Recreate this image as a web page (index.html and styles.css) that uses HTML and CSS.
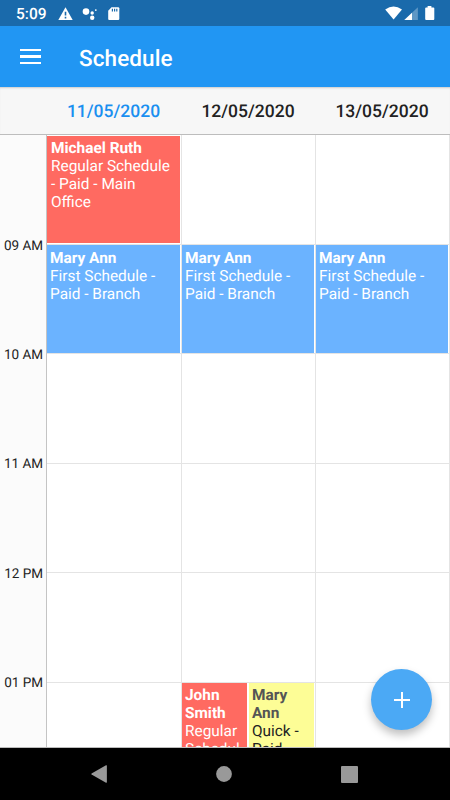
FILE: index.html
```html
<!DOCTYPE html>
<html lang="en">
<head>
<meta charset="UTF-8" />
<meta name="viewport" content="width=device-width, initial-scale=1" />
<title>Schedule</title>
<link rel="stylesheet" href="styles.css">
</head>
<body>

<div class="status-bar">
  <span class="clock">5:09</span>
  <svg class="status-left" width="64" height="16" viewBox="0 0 64 16" fill="#fff">
    <path d="M7.5 1.2L14.7 14H0.3z" />
    <path d="M6.7 5.8h1.6v3.8H6.7zM6.7 10.8h1.6v1.6H6.7z" fill="#1a6aab" />
    <circle cx="28" cy="5.6" r="3.3" />
    <circle cx="34.2" cy="7" r="1.7" />
    <circle cx="34.2" cy="11.8" r="2.2" />
    <circle cx="37.8" cy="4.1" r="0.9" />
    <path d="M53.5 1.2h6.7q1.1 0 1.1 1.1v10.6q0 1.1-1.1 1.1h-8.9q-1.1 0-1.1-1.1V4.8z" />
    <path d="M53.8 2.8h1.2v2.7h-1.2zM56 2.8h1.2v2.7H56zM58.2 2.8h1.2v2.7h-1.2z" fill="#1a6aab" />
  </svg>
  <svg class="status-right" width="50" height="16" viewBox="0 0 50 16" fill="#fff">
    <path d="M0.2 3.4Q8.5-2.6 17 3.4L8.6 13.6z" />
    <path d="M32.9 1.2v12.8H19.3z" fill="#5e97c5" />
    <path d="M27 6.8v7.2h-7.7z" />
    <path d="M42.6 0h3.8v1.4h2q.9 0 .9.9v10.8q0 .9-.9.9h-7.3q-.9 0-.9-.9V2.3q0-.9.9-.9h1.5z" />
  </svg>
</div>

<div class="app-bar">
  <button class="menu-btn" aria-label="Menu">
    <span></span>
    <span></span>
    <span></span>
  </button>
  <h1>Schedule</h1>
</div>

<div class="day-header">
  <div class="corner"></div>
  <div class="day today">11/05/2020</div>
  <div class="day">12/05/2020</div>
  <div class="day">13/05/2020</div>
</div>

<div class="calendar">
  <div class="times">
    <div class="time">09 AM</div>
    <div class="time">10 AM</div>
    <div class="time">11 AM</div>
    <div class="time">12 PM</div>
    <div class="time">01 PM</div>
  </div>

  <div class="column">
    <div class="slot first">
      <div class="event red"><b>Michael Ruth</b>Regular Schedule - Paid - Main Office</div>
    </div>
    <div class="slot">
      <div class="event blue"><b>Mary Ann</b>First Schedule - Paid - Branch</div>
    </div>
    <div class="slot"></div>
    <div class="slot"></div>
    <div class="slot"></div>
    <div class="slot"></div>
  </div>

  <div class="column">
    <div class="slot first"></div>
    <div class="slot">
      <div class="event blue"><b>Mary Ann</b>First Schedule - Paid - Branch</div>
    </div>
    <div class="slot"></div>
    <div class="slot"></div>
    <div class="slot"></div>
    <div class="slot split">
      <div class="event red"><b>John Smith</b>Regular Schedul</div>
      <div class="event yellow"><b>Mary Ann</b>Quick - Paid</div>
    </div>
  </div>

  <div class="column">
    <div class="slot first"></div>
    <div class="slot">
      <div class="event blue"><b>Mary Ann</b>First Schedule - Paid - Branch</div>
    </div>
    <div class="slot"></div>
    <div class="slot"></div>
    <div class="slot"></div>
    <div class="slot"></div>
  </div>
</div>

<button class="add-btn" aria-label="Add">
  <svg width="16" height="16" viewBox="0 0 16 16" fill="#fff">
    <path d="M7 0h2v7h7v2H9v7H7V9H0V7h7z" />
  </svg>
</button>

<div class="nav-bar">
  <svg width="16" height="18" viewBox="0 0 16 18" fill="#999"><path d="M15 0.3q.9-.4.9.6v16.2q0 1-.9.6L.6 9.5q-.6-.5 0-1z" /></svg>
  <svg width="16" height="16" viewBox="0 0 16 16" fill="#999"><circle cx="8" cy="8" r="7.9" /></svg>
  <svg width="17" height="17" viewBox="0 0 17 17" fill="#999"><rect width="17" height="17" rx="1" /></svg>
</div>

</body>
</html>
```
FILE: styles.css
```css
* {
  box-sizing: border-box;
}
body {
  margin: 0;
  width: 450px;
  height: 800px;
  display: flex;
  flex-direction: column;
  overflow: hidden;
  background: #fff;
  font-family: Roboto, sans-serif;
  text-rendering: geometricPrecision;
  color: #222;
}
button {
  border: none;
  padding: 0;
  cursor: pointer;
}

/* top bars */
.status-bar {
  height: 26px;
  flex: none;
  display: flex;
  align-items: center;
  padding: 0 15px 0 16px;
  background: #1a6aab;
  color: #fff;
}
.clock {
  width: 42px;
  font-size: 15.5px;
  font-weight: 500;
  line-height: 26px;
  padding-top: 2px;
}
.status-left,
.status-right {
  margin-top: 1px;
}
.status-right {
  margin-left: auto;
}
.app-bar {
  height: 61px;
  flex: none;
  display: flex;
  align-items: center;
  padding-left: 20px;
  background: #2196f3;
  color: #fff;
}
.menu-btn {
  width: 21px;
  display: flex;
  flex-direction: column;
  gap: 4px;
  background: none;
}
.menu-btn span {
  height: 2.5px;
  width: 100%;
  background: #fff;
}
.app-bar h1 {
  margin: 4px 0 0 38px;
  font-size: 22.5px;
  font-weight: 500;
  letter-spacing: 0.1px;
}

/* calendar */
.day-header,
.calendar {
  display: grid;
  grid-template-columns: 47px 135px 134px 134px;
}
.day-header {
  height: 48px;
  flex: none;
  background: #f7f7f7;
  border-bottom: 1px solid #bdbdbd;
  box-shadow: inset 0 2px 2px -1px #ccc;
}
.day {
  font-size: 17.5px;
  font-weight: 500;
  line-height: 50px;
  text-align: center;
  padding-right: 2px;
}
.today {
  color: #1a8ff0;
}
.calendar {
  height: 613px;
  flex: none;
  overflow: hidden;
  border-bottom: 1px solid #bbb;
}
.times {
  padding: 102px 3px 0 0;
  background: #fbfbfb;
  border-right: 1px solid #c4c4c4;
}
.time {
  height: 109.2px;
  font-size: 13.5px;
  line-height: 18px;
  text-align: right;
}
.column {
  border-right: 1px solid #e4e4e4;
}
.slot {
  height: 109px;
  padding-right: 1px;
  border-bottom: 1px solid #e4e4e4;
}
.slot:nth-child(odd) {
  height: 110px;
}
.slot.first {
  padding: 1px 1px 1px 0;
}
.event {
  height: 100%;
  padding: 4px 3px 0 3px;
  font-size: 15.4px;
  line-height: 18px;
  overflow: hidden;
}
.first .event {
  padding: 3px 8px 0 4px;
}
.event b {
  display: block;
}
.red {
  background: #ff6a61;
  color: #fff;
}
.blue {
  background: #6bb3ff;
  color: #fff;
}
.yellow {
  background: #fdfd96;
  color: #222;
}
.yellow b {
  color: #555;
}
.split {
  display: grid;
  grid-template-columns: 65px 65px;
  gap: 2px;
}
.split .event {
  padding-top: 3px;
}

/* floating add button */
.add-btn {
  position: absolute;
  left: 371px;
  top: 669px;
  width: 61px;
  height: 61px;
  border-radius: 50%;
  display: flex;
  align-items: center;
  justify-content: center;
  background: #4ba9f5;
  box-shadow: 0 5px 9px rgba(0, 0, 0, 0.25);
}

.nav-bar {
  height: 52px;
  flex: none;
  display: flex;
  align-items: center;
  justify-content: space-between;
  padding: 0 92px 0 91px;
  background: #000;
}
```
